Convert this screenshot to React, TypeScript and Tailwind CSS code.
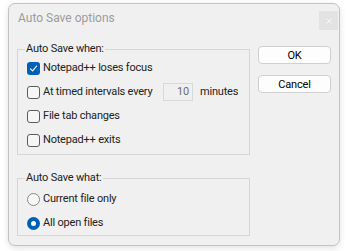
const font = { fontFamily: "Roboto, 'Liberation Sans', sans-serif" };

function CheckBox({ checked }: { checked?: boolean }) {
  if (checked) {
    return (
      <span className="flex h-[13px] w-[13px] shrink-0 items-center justify-center rounded-[3px] bg-[#005fb8]">
        <svg width="9" height="9" viewBox="0 0 9 9" fill="none">
          <path d="M1.5 4.8 L3.6 6.8 L7.6 2.2" stroke="#fff" strokeWidth="1.1" strokeLinecap="round" strokeLinejoin="round" />
        </svg>
      </span>
    );
  }
  return <span className="h-[13px] w-[13px] shrink-0 rounded-[3px] border border-[#5c5c5c] bg-[#f6f6f6]" />;
}

function Radio({ checked }: { checked?: boolean }) {
  if (checked) {
    return (
      <span className="flex h-[13px] w-[13px] shrink-0 items-center justify-center rounded-full bg-[#005fb8]">
        <span className="h-[5px] w-[5px] rounded-full bg-white" />
      </span>
    );
  }
  return <span className="h-[13px] w-[13px] shrink-0 rounded-full border border-[#8a8a8a] bg-[#f6f6f6]" />;
}

function Row({ children }: { children: React.ReactNode }) {
  return <div className="flex h-[24px] items-center gap-[3px] pl-[9px]">{children}</div>;
}

function Group({ label, children, className = "" }: { label: string; children: React.ReactNode; className?: string }) {
  return (
    <fieldset className={`border border-[#d6d6d6] ${className}`}>
      <legend className="ml-[7px] px-[1px] text-[11px] leading-[14px] text-[#222]">{label}</legend>
      {children}
    </fieldset>
  );
}

export default function App() {
  return (
    <div className="h-[251px] w-[348px] bg-white pl-[8px] pt-[3px]" style={font}>
      <div className="flex h-[243px] w-[332px] flex-col rounded-[7px] border border-[#c2c2c2] bg-[#f0f0f0] shadow-[0_2px_6px_rgba(0,0,0,0.12)]">
        {/* title bar */}
        <div className="flex h-[30px] items-start justify-between pl-[9px] pr-[1px]">
          <span className="pt-[7px] text-[12px] leading-[14px] text-[#9c9c9c]">Auto Save options</span>
          <span className="mt-[7px] flex h-[19px] w-[19px] items-center justify-center bg-[#e3e3e3]">
            <svg width="6" height="6" viewBox="0 0 6 6">
              <path d="M0.5 0.5 L5.5 5.5 M5.5 0.5 L0.5 5.5" stroke="#f7f7f7" strokeWidth="1" />
            </svg>
          </span>
        </div>

        {/* body */}
        <div className="flex gap-[8px] pl-[8px] text-[11px] tracking-[-0.2px] text-[#222]">
          <div className="flex w-[233px] flex-col">
            <Group label="Auto Save when:" className="mt-[8px] pb-[2px]">
              <Row>
                <CheckBox checked />
                <span>Notepad++ loses focus</span>
              </Row>
              <Row>
                <CheckBox />
                <span className="w-[117px]">At timed intervals every</span>
                <span className="flex h-[18px] w-[30px] items-center justify-end border border-[#d8d8d8] bg-[#f0f0f0] pr-[3px] text-[#6d6d6d]">
                  10
                </span>
                <span className="ml-[4px]">minutes</span>
              </Row>
              <Row>
                <CheckBox />
                <span>File tab changes</span>
              </Row>
              <Row>
                <CheckBox />
                <span>Notepad++ exits</span>
              </Row>
            </Group>

            <Group label="Auto Save what:" className="mt-[16px] pt-[2px]">
              <Row>
                <Radio />
                <span>Current file only</span>
              </Row>
              <Row>
                <Radio checked />
                <span>All open files</span>
              </Row>
            </Group>
          </div>

          <div className="mt-[12px] flex flex-col gap-[11px]">
            <button className="h-[18px] w-[73px] rounded-[4px] border border-[#cfcfcf] bg-[#fdfdfd] text-[11px] leading-none text-black">
              OK
            </button>
            <button className="h-[18px] w-[73px] rounded-[4px] border border-[#cfcfcf] bg-[#fdfdfd] text-[11px] leading-none text-black">
              Cancel
            </button>
          </div>
        </div>
      </div>
    </div>
  );
}
